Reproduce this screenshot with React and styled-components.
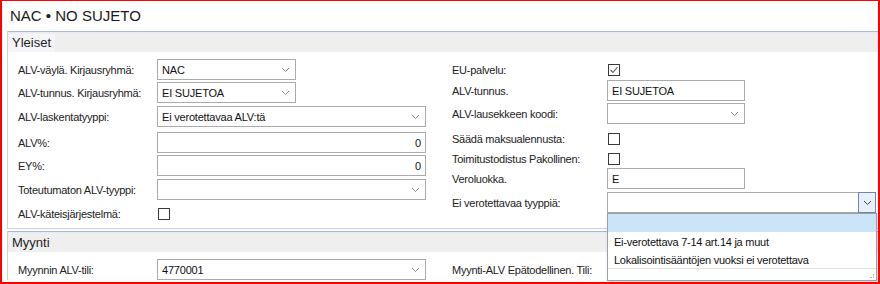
import React from "react";
import styled, { createGlobalStyle } from "styled-components";

const Global = createGlobalStyle`
  html, body { margin: 0; padding: 0; background: #fff; }
  body { font-family: "Liberation Sans", Arial, sans-serif; color: #1e1e1e; }
  * { box-sizing: border-box; }
`;

const Frame = styled.div`
  width: 880px;
  height: 284px;
  border-style: solid;
  border-color: #ff0000;
  border-width: 1px 2px 2px 2px;
  padding-left: 5px;
  overflow: hidden;
  background: #fff;
`;

const Title = styled.div`
  height: 30px;
  padding: 6px 0 0 3px;
  font-size: 15px;
  color: #1a1a1a;
`;

const Group = styled.section`
  border-left: 1px solid #c9d1e2;
  border-bottom: ${p => (p.$open ? "none" : "1px solid #c9d1e2")};
  margin-top: ${p => p.$mt || 0}px;
`;

const Header = styled.div`
  height: 21px;
  border-top: 1px solid #aab8dc;
  box-shadow: inset 0 1px 0 #e6ecf8;
  background: #efefef;
  display: flex;
  align-items: center;
  font-size: 13px;
  color: #1e1e1e;
`;

const HeaderText = styled.span`
  background: ${p => (p.$plain ? "transparent" : "#f4f4f9")};
  padding: 1px 4px 2px 4px;
  margin-top: 1px;
`;

const Body = styled.div`
  display: flex;
  padding: ${p => p.$pad || "7px 0 4px 10px"};
  background: #fff;
`;

const Column = styled.div`
  display: flex;
  flex-direction: column;
  width: ${p => p.$w}px;
  margin-left: ${p => p.$ml || 0}px;
`;

const Row = styled.div`
  display: flex;
  align-items: center;
  height: ${p => p.$h || 21}px;
  margin-top: ${p => p.$mt || 0}px;
`;

const Label = styled.div`
  width: ${p => p.$w}px;
  flex: none;
  font-size: 11px;
  letter-spacing: -0.25px;
  color: #222;
  white-space: nowrap;
`;

const Field = styled.div`
  position: relative;
  width: ${p => p.$w}px;
  height: 21px;
  flex: none;
  border: 1px solid #ababab;
  background: #fff;
  display: flex;
  align-items: center;
  justify-content: ${p => (p.$right ? "flex-end" : "flex-start")};
  padding: 0 ${p => (p.$select ? "18px" : "4px")} 0 4px;
  font-size: 11px;
  letter-spacing: -0.2px;
  color: #111;
`;

const Chevron = styled.span`
  position: absolute;
  right: 4px;
  top: 0;
  bottom: 0;
  width: 11px;
  display: flex;
  align-items: center;
  justify-content: center;
`;

const FocusButton = styled.span`
  position: absolute;
  right: -1px;
  top: -1px;
  bottom: -1px;
  width: 18px;
  border: 1px solid #6f86a8;
  background: #e8f1fb;
  display: flex;
  align-items: center;
  justify-content: center;
`;

const Check = styled.span`
  width: 12px;
  height: 12px;
  border: 1px solid #3a3a3a;
  background: #fff;
  margin-left: 1px;
  display: flex;
  align-items: center;
  justify-content: center;
`;

const Menu = styled.div`
  position: absolute;
  left: -1px;
  top: 20px;
  width: 270px;
  height: 68px;
  border: 1px solid #9aa0a8;
  background: #fff;
  box-shadow: 1px 2px 3px rgba(0,0,0,0.18);
  z-index: 5;
  display: flex;
  flex-direction: column;
`;

const MenuItem = styled.div`
  height: 18px;
  flex: none;
  display: flex;
  align-items: center;
  padding-left: 6px;
  font-size: 11px;
  letter-spacing: -0.25px;
  color: #111;
  background: ${p => (p.$active ? "#cce4f7" : "transparent")};
  border-bottom: ${p => (p.$sep ? "1px solid #e3e3e3" : "none")};
  margin-bottom: ${p => (p.$gap ? "1px" : "0")};
`;

const Grip = styled.span`
  position: absolute;
  right: 2px;
  bottom: 2px;
  width: 4px;
  height: 4px;
  border-right: 1px dotted #b0b0b0;
  border-bottom: 1px dotted #b0b0b0;
`;

const ChevronIcon = ({ color = "#8a8a8a" }) => (
  <svg width="9" height="6" viewBox="0 0 9 6">
    <polyline points="1,1 4.5,4.5 8,1" fill="none" stroke={color} strokeWidth="1" />
  </svg>
);

const Select = ({ w, value, focus, children }) => (
  <Field $w={w} $select>
    {value}
    {focus ? (
      <FocusButton>
        <ChevronIcon color="#444" />
      </FocusButton>
    ) : (
      <Chevron>
        <ChevronIcon />
      </Chevron>
    )}
    {children}
  </Field>
);

const CheckBox = ({ checked }) => (
  <Check>
    {checked && (
      <svg width="10" height="10" viewBox="0 0 10 10">
        <polyline points="1.5,5 4,7.5 8.5,2" fill="none" stroke="#5a5a5a" strokeWidth="1.1" />
      </svg>
    )}
  </Check>
);

export default function App() {
  return (
    <>
      <Global />
      <Frame>
        <Title>NAC • NO SUJETO</Title>
        <Group>
          <Header>
            <HeaderText>Yleiset</HeaderText>
          </Header>
          <Body>
            <Column $w={408}>
              <Row>
                <Label $w={139}>ALV-väylä. Kirjausryhmä:</Label>
                <Select w={139} value="NAC" />
              </Row>
              <Row $mt={2}>
                <Label $w={139}>ALV-tunnus. Kirjausryhmä:</Label>
                <Select w={139} value="EI SUJETOA" />
              </Row>
              <Row $mt={3}>
                <Label $w={139}>ALV-laskentatyyppi:</Label>
                <Select w={269} value="Ei verotettavaa ALV:tä" />
              </Row>
              <Row $mt={5}>
                <Label $w={139}>ALV%:</Label>
                <Field $w={269} $right>0</Field>
              </Row>
              <Row $mt={2}>
                <Label $w={139}>EY%:</Label>
                <Field $w={269} $right>0</Field>
              </Row>
              <Row $mt={3}>
                <Label $w={139}>Toteutumaton ALV-tyyppi:</Label>
                <Select w={269} />
              </Row>
              <Row $mt={3}>
                <Label $w={139}>ALV-käteisjärjestelmä:</Label>
                <CheckBox />
              </Row>
            </Column>
            <Column $w={420} $ml={26}>
              <Row>
                <Label $w={155}>EU-palvelu:</Label>
                <CheckBox checked />
              </Row>
              <Row>
                <Label $w={155}>ALV-tunnus.</Label>
                <Field $w={138}>EI SUJETOA</Field>
              </Row>
              <Row $mt={2}>
                <Label $w={155}>ALV-lausekkeen koodi:</Label>
                <Select w={138} />
              </Row>
              <Row $mt={4}>
                <Label $w={155}>Säädä maksualennusta:</Label>
                <CheckBox />
              </Row>
              <Row $h={19}>
                <Label $w={155}>Toimitustodistus Pakollinen:</Label>
                <CheckBox />
              </Row>
              <Row>
                <Label $w={155}>Veroluokka.</Label>
                <Field $w={138}>E</Field>
              </Row>
              <Row $mt={3}>
                <Label $w={155}>Ei verotettavaa tyyppiä:</Label>
                <Select w={269} focus>
                  <Menu>
                    <MenuItem $active $gap />
                    <MenuItem>Ei-verotettava 7-14 art.14 ja muut</MenuItem>
                    <MenuItem $sep>Lokalisointisääntöjen vuoksi ei verotettava</MenuItem>
                    <Grip />
                  </Menu>
                </Select>
              </Row>
            </Column>
          </Body>
        </Group>
        <Group $open $mt={2}>
          <Header>
            <HeaderText $plain>Myynti</HeaderText>
          </Header>
          <Body $pad="7px 0 0 10px">
            <Column $w={408}>
              <Row>
                <Label $w={139}>Myynnin ALV-tili:</Label>
                <Select w={269} value="4770001" />
              </Row>
            </Column>
            <Column $w={420} $ml={26}>
              <Row>
                <Label $w={155}>Myynti-ALV Epätodellinen. Tili:</Label>
              </Row>
            </Column>
          </Body>
        </Group>
      </Frame>
    </>
  );
}
